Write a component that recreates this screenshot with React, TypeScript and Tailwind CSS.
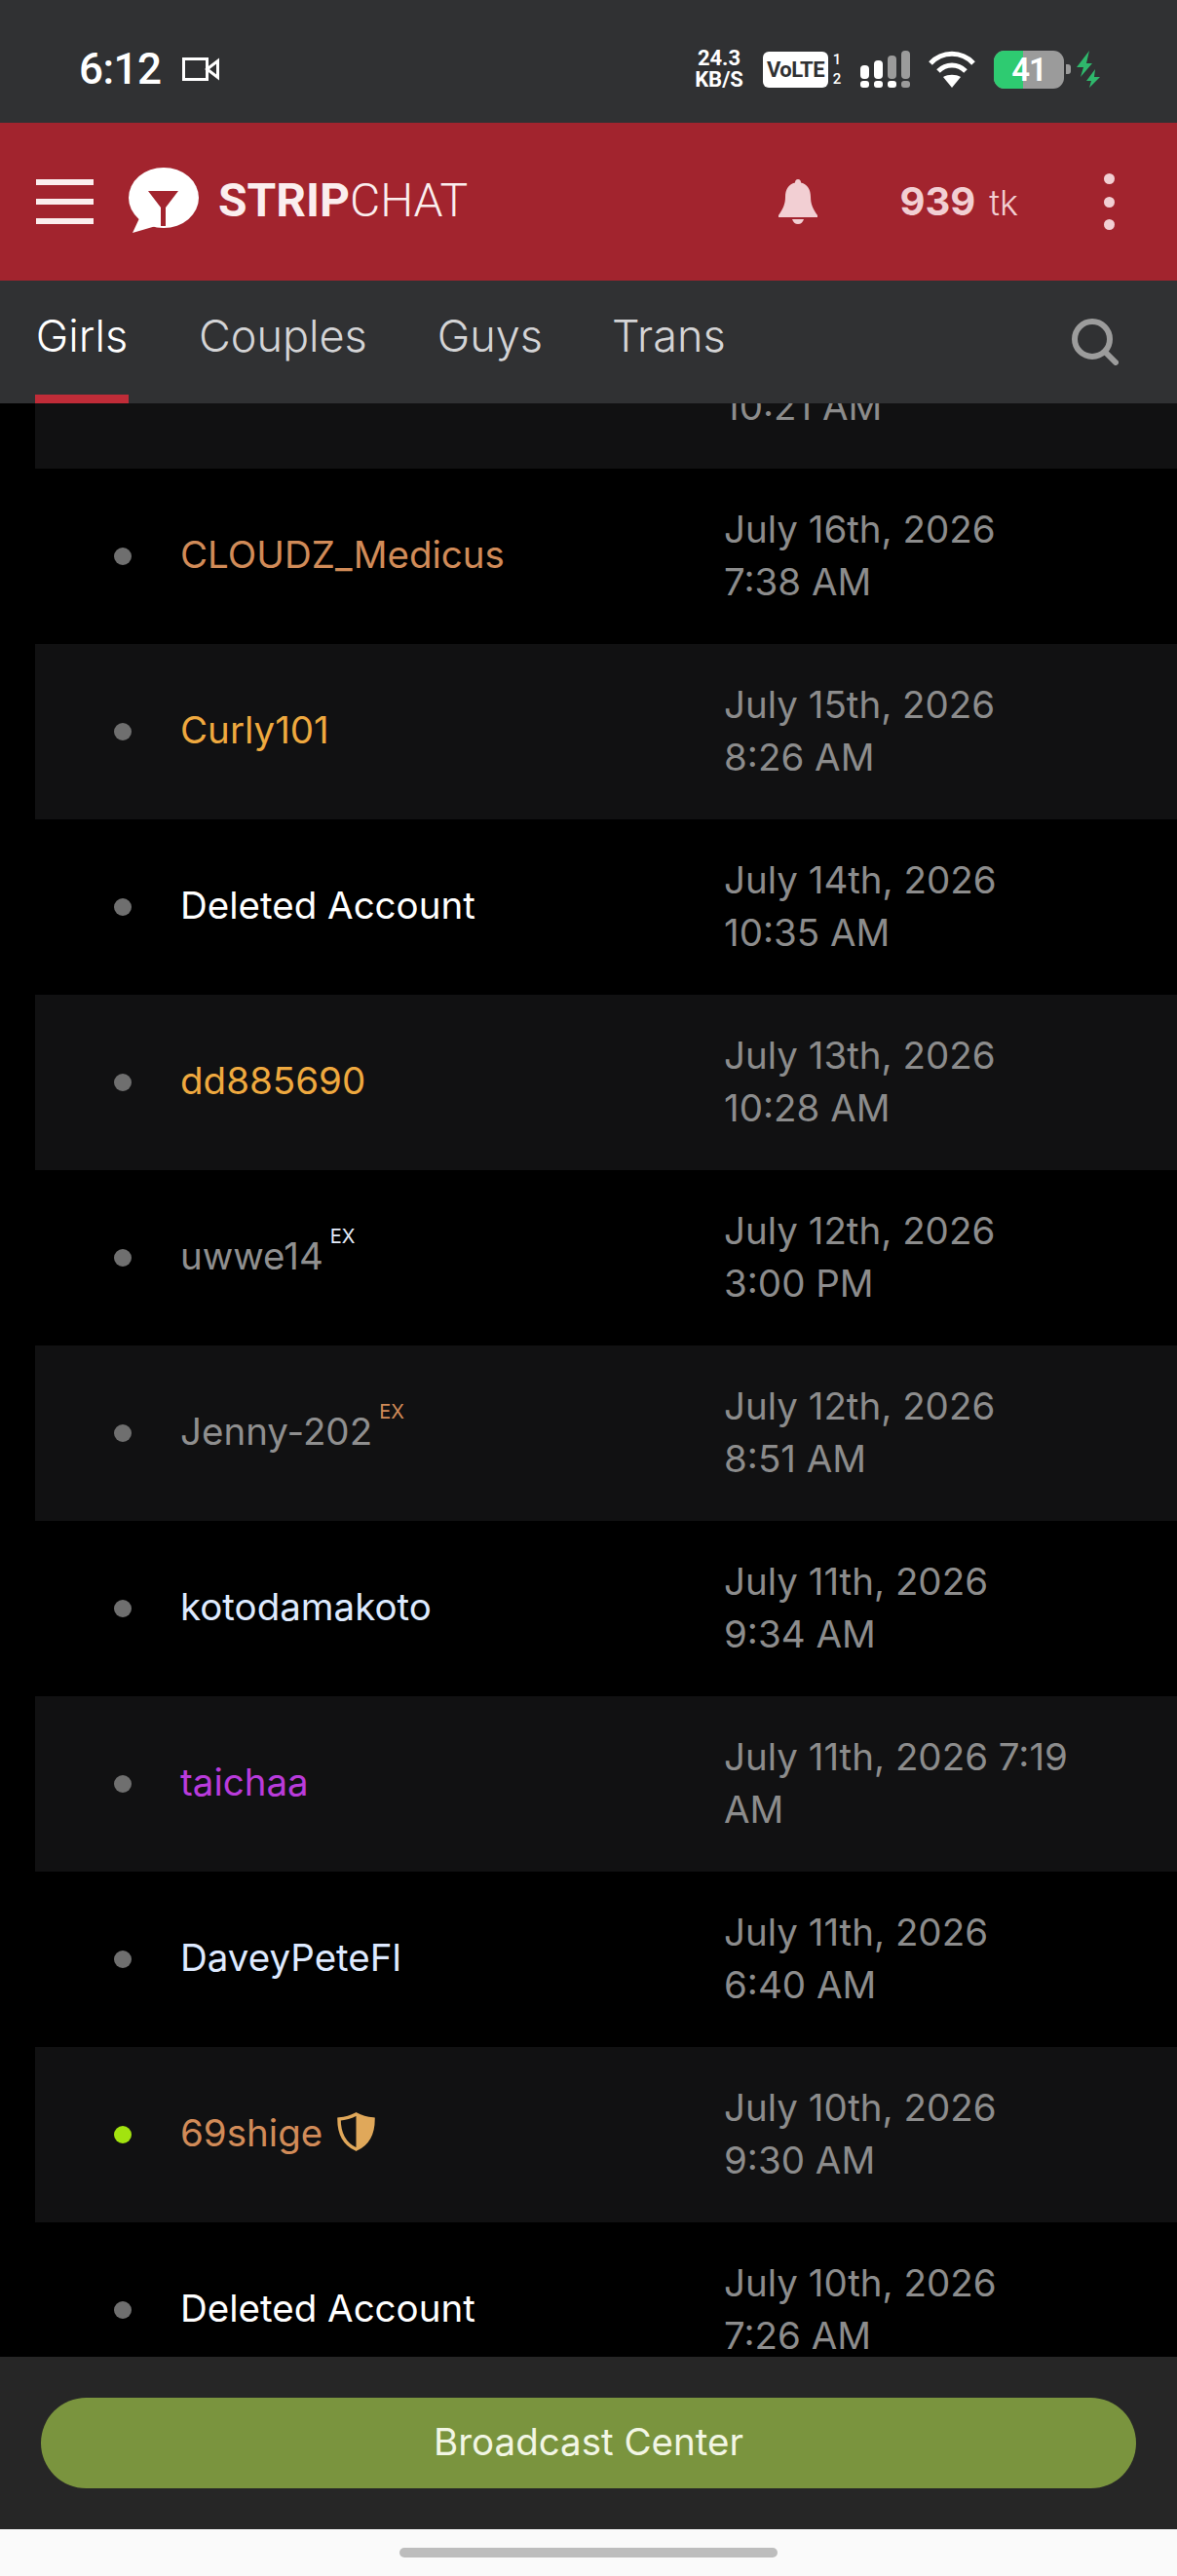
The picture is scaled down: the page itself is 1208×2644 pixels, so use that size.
import React from "react";

type Row = {
    name: string;
    color: string;
    lines: string[];
    online?: boolean;
    ex?: string;
    shield?: boolean;
};

const rows: Row[] = [
    { name: "", color: "text-white", lines: ["July 17th, 2026", "10:21 AM"] },
    { name: "CLOUDZ_Medicus", color: "text-[#d18b58]", lines: ["July 16th, 2026", "7:38 AM"] },
    { name: "Curly101", color: "text-[#efa93f]", lines: ["July 15th, 2026", "8:26 AM"] },
    { name: "Deleted Account", color: "text-white", lines: ["July 14th, 2026", "10:35 AM"] },
    { name: "dd885690", color: "text-[#efa93f]", lines: ["July 13th, 2026", "10:28 AM"] },
    { name: "uwwe14", color: "text-[#8f8f8f]", lines: ["July 12th, 2026", "3:00 PM"], ex: "text-[#e4ecfb]" },
    { name: "Jenny-202", color: "text-[#8f8f8f]", lines: ["July 12th, 2026", "8:51 AM"], ex: "text-[#d18b58]" },
    { name: "kotodamakoto", color: "text-[#deeaff]", lines: ["July 11th, 2026", "9:34 AM"] },
    { name: "taichaa", color: "text-[#b93bdb]", lines: ["July 11th, 2026 7:19", "AM"] },
    { name: "DaveyPeteFl", color: "text-[#deeaff]", lines: ["July 11th, 2026", "6:40 AM"] },
    { name: "69shige", color: "text-[#d18b58]", lines: ["July 10th, 2026", "9:30 AM"], online: true, shield: true },
    { name: "Deleted Account", color: "text-white", lines: ["July 10th, 2026", "7:26 AM"] },
];

const StatusBar = () => (
    <div className="flex h-[126px] shrink-0 items-center bg-[#303133] pt-[16px] pl-[81px] text-white">
        <span className="font-[Roboto,sans-serif] text-[44px] leading-none font-medium tracking-[-0.5px]">6:12</span>
        <svg className="ml-[21px]" width="38" height="24" viewBox="0 0 38 24" fill="none" stroke="white" strokeWidth="3">
            <rect x="1.5" y="1.5" width="24" height="21" />
            <path d="M25.5 12 L36.5 3.5 V20.5 Z" />
        </svg>
        <div className="ml-auto flex w-[498px] items-center">
            <div className="flex w-[56px] flex-col items-center font-[Roboto,sans-serif] text-[22px] leading-[22px] font-bold">
                <span>24.3</span>
                <span>KB/S</span>
            </div>
            <div className="ml-[17px] flex h-[37px] w-[67px] items-center justify-center rounded-[6px] bg-white font-[Roboto,sans-serif] text-[22px] font-bold tracking-tight text-[#303133]">
                VoLTE
            </div>
            <div className="ml-[4px] flex w-[10px] flex-col items-center font-[Roboto,sans-serif] text-[15px] leading-[20px] font-medium">
                <span>1</span>
                <span>2</span>
            </div>
            <svg className="ml-[19px]" width="51" height="38" viewBox="0 0 51 38">
                <rect x="0" y="15" width="9" height="14" rx="4" fill="white" />
                <rect x="14" y="10" width="9" height="19" rx="4" fill="white" />
                <rect x="28" y="5" width="9" height="24" rx="4" fill="#9b9b9b" />
                <rect x="42" y="0" width="9" height="29" rx="4" fill="#9b9b9b" />
                <rect x="0" y="31" width="9" height="7" rx="3" fill="white" />
                <rect x="14" y="31" width="9" height="7" rx="3" fill="white" />
                <rect x="28" y="31" width="9" height="7" rx="3" fill="white" />
                <rect x="42" y="31" width="9" height="7" rx="3" fill="#9b9b9b" />
            </svg>
            <svg className="ml-[19px]" width="48" height="38" viewBox="0 0 48 38" fill="none" stroke="white" strokeWidth="5">
                <path d="M2 13 C14 0 34 0 46 13" />
                <path d="M10 21 C18 13 30 13 38 21" />
                <path d="M24 38 L15 27 C20 24 28 24 33 27 Z" fill="white" stroke="none" />
            </svg>
            <div className="relative ml-[19px] flex h-[39px] w-[72px] items-center justify-center overflow-hidden rounded-[11px] bg-[#9b9b9b]">
                <div className="absolute inset-y-0 left-0 w-[30px] bg-[#2ecb71]" />
                <span className="relative font-[Roboto,sans-serif] text-[33px] leading-none font-semibold tracking-[-1px]">41</span>
            </div>
            <div className="ml-[2px] h-[10px] w-[5px] rounded-r-[3px] bg-[#9b9b9b]" />
            <svg className="ml-[6px]" width="24" height="38" viewBox="0 0 24 38" fill="#2fb86c">
                <path d="M13 0 L0 17 H7 L4 27 L16 13 H10 Z" />
                <path d="M19 19 L10 31 H15 L13 38 L24 27 H18 Z" />
            </svg>
        </div>
    </div>
);

const Header = () => (
    <div className="flex h-[162px] shrink-0 items-center bg-[#a2242e] pl-[37px]">
        <div className="flex h-[46px] w-[59px] flex-col justify-between">
            <div className="h-[6px] bg-[#fbeeee]" />
            <div className="h-[6px] bg-[#fbeeee]" />
            <div className="h-[6px] bg-[#fbeeee]" />
        </div>
        <svg className="mt-[-4px] ml-[36px]" width="72" height="67" viewBox="0 0 72 67">
            <ellipse cx="36" cy="31" rx="36" ry="31" fill="white" />
            <path d="M12 50 L4 67 L28 60 Z" fill="white" />
            <path d="M20 24 H51 L38 41 V60 H33 V41 Z" fill="#a2242e" />
        </svg>
        <div className="mt-[-2px] ml-[20px] font-[Roboto,sans-serif] text-[48px] leading-none text-[#fbeeee]">
            <span className="font-bold">STRIP</span>
            <span className="font-light">CHAT</span>
        </div>
        <svg className="ml-auto" width="40" height="46" viewBox="0 0 40 46" fill="#f2cfd3">
            <path d="M20 0 C22 0 23 1.500 23 3.500 C30 5 33 11 33 18 C33 25 35 30 40 37 V39 H0 V37 C5 30 7 25 7 18 C7 11 10 5 17 3.500 C17 1.500 18 0 20 0 Z" />
            <path d="M14 41 H26 C25 44 23 46 20 46 C17 46 15 44 14 41 Z" />
        </svg>
        <div className="ml-[84px] flex items-baseline font-[Inter,sans-serif] text-[#f2cfd3]">
            <span className="text-[40px] leading-none font-bold">939</span>
            <span className="ml-[14px] text-[36px] leading-none font-light">tk</span>
        </div>
        <div className="mr-[64px] ml-[88px] flex h-[58px] flex-col justify-between">
            <div className="size-[11px] rounded-full bg-[#f2cfd3]" />
            <div className="size-[11px] rounded-full bg-[#f2cfd3]" />
            <div className="size-[11px] rounded-full bg-[#f2cfd3]" />
        </div>
    </div>
);

const Tabs = () => (
    <div className="flex h-[126px] shrink-0 bg-[#303133] pl-[36px] font-[Inter,sans-serif] text-[45px] leading-[56px] font-light text-[#d4d4d6]">
        <div className="flex w-[96px] flex-col items-center border-b-[9px] border-[#c02c38] pt-[29px] text-white">Girls</div>
        <div className="ml-[72px] pt-[29px]">Couples</div>
        <div className="ml-[72px] pt-[29px]">Guys</div>
        <div className="ml-[71px] pt-[29px]">Trans</div>
        <svg className="mt-[39px] ml-auto mr-[60px]" width="48" height="48" viewBox="0 0 48 48" fill="none" stroke="#9c9c9c" strokeWidth="6" strokeLinecap="round">
            <circle cx="21" cy="21" r="18" />
            <path d="M34 34 L45 45" />
        </svg>
    </div>
);

const Shield = () => (
    <svg className="ml-[15px] mt-[-4px]" width="39" height="40" viewBox="0 0 39 40">
        <path d="M19.500 2 C14 5 8 6.500 2 7 C2 20 6 32 19.500 38 C33 32 37 20 37 7 C31 6.500 25 5 19.500 2 Z" fill="none" stroke="#e0a85a" strokeWidth="3.500" />
        <path d="M19.500 2 C25 5 31 6.500 37 7 C37 20 33 32 19.500 38 Z" fill="#e0a85a" />
    </svg>
);

const ListRow = ({ row, striped }: { row: Row; striped: boolean }) => (
    <div className={`ml-[36px] flex h-[180px] shrink-0 items-center ${striped ? "bg-[#111112]" : ""}`}>
        <div className={`ml-[81px] size-[18px] rounded-full ${row.online ? "bg-[#a2e30f]" : "bg-[#6f6f6f]"}`} />
        <div className={`mb-[3px] ml-[50px] flex w-[558px] items-center text-[38.5px] ${row.color}`}>
            <span>{row.name}</span>
            {row.ex && <span className={`relative -top-[21px] ml-[7px] text-[20px] leading-none ${row.ex}`}>EX</span>}
            {row.shield && <Shield />}
        </div>
        <div className="mb-[2px] text-[38.5px] leading-[54px] whitespace-nowrap text-[#8c8c8c]">
            {row.lines.map((l) => (
                <div key={l}>{l}</div>
            ))}
        </div>
    </div>
);

export default function App() {
    return (
        <div className="flex h-[2644px] w-[1208px] flex-col overflow-hidden bg-black font-[Inter,sans-serif]">
            <StatusBar />
            <Header />
            <Tabs />
            <div className="min-h-0 flex-1 overflow-hidden">
                <div className="-mt-[113px] flex flex-col">
                    {rows.map((row, i) => (
                        <ListRow key={i} row={row} striped={i % 2 === 0} />
                    ))}
                </div>
            </div>
            <div className="flex h-[177px] shrink-0 items-center justify-center bg-[#262626]">
                <div className="flex h-[93px] w-[1124px] items-center justify-center rounded-full bg-[#7a943e] pb-[2px] text-[38.5px] text-[#f2f6e4]">
                    Broadcast Center
                </div>
            </div>
            <div className="flex h-[48px] shrink-0 justify-center bg-[#fafafa] pt-[19px]">
                <div className="h-[10px] w-[388px] rounded-full bg-[#bdbdbd]" />
            </div>
        </div>
    );
}
